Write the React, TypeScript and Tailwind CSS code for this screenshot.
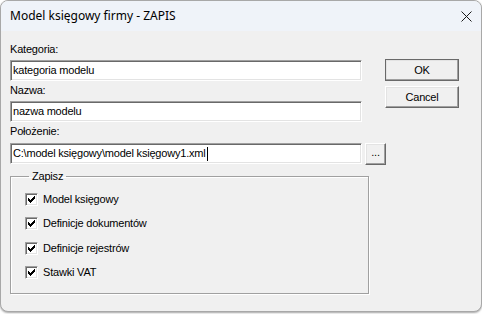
import React from "react";

const dlg = { fontFamily: '"Liberation Sans", Arial, sans-serif', letterSpacing: "-0.2px" };

function Field({ value, caret }: { value: string; caret?: boolean }) {
  return (
    <div className="flex h-[21px] w-[352px] shrink-0 items-center border border-t-[#a0a0a0] border-l-[#a0a0a0] border-b-white border-r-white bg-white pl-[2px] text-[11px] leading-[13px] text-black shadow-[inset_1px_1px_0_#696969,inset_-1px_-1px_0_#e3e3e3]">
      <span className="whitespace-pre">{value}</span>
      {caret && <span className="ml-[1px] h-[14px] w-px bg-black" />}
    </div>
  );
}

function WinButton({ label, className = "" }: { label: string; className?: string }) {
  return (
    <button
      className={`flex shrink-0 items-center justify-center border border-t-white border-l-white border-b-[#696969] border-r-[#696969] bg-[#f0f0f0] text-[11px] leading-[13px] text-black shadow-[inset_-1px_-1px_0_#a0a0a0,inset_1px_1px_0_#e3e3e3] ${className}`}
    >
      {label}
    </button>
  );
}

function Check({ label }: { label: string }) {
  return (
    <div className="flex h-[13px] items-center gap-[5px]">
      <div className="flex h-[13px] w-[13px] items-center justify-center border border-t-[#a0a0a0] border-l-[#a0a0a0] border-b-white border-r-white bg-white shadow-[inset_1px_1px_0_#696969,inset_-1px_-1px_0_#e3e3e3]">
        <svg width="7" height="7" viewBox="0 0 7 7" shapeRendering="crispEdges">
          <path d="M0 2h1v3h-1zM1 3h1v3h-1zM2 4h1v3h-1zM3 3h1v3h-1zM4 2h1v3h-1zM5 1h1v3h-1zM6 0h1v3h-1z" fill="#000" />
        </svg>
      </div>
      <span className="text-[11px] leading-[13px] text-black">{label}</span>
    </div>
  );
}

export default function App() {
  return (
    <div className="h-[314px] w-[482px] overflow-hidden bg-white">
      <div className="flex h-[312px] flex-col overflow-hidden rounded-[8px] border border-[#a8a8a8] bg-[#f0f0f0] shadow-[0_1px_2px_rgba(0,0,0,0.35)]">
        {/* Title bar */}
        <div className="flex h-[30px] shrink-0 items-center justify-between bg-[#eff3f9] pl-[9px] pr-[9px]">
          <span
            className="text-[12px] text-black"
            style={{ fontFamily: '"Noto Sans", "Segoe UI", sans-serif' }}
          >
            Model księgowy firmy - ZAPIS
          </span>
          <svg width="11" height="11" viewBox="0 0 11 11">
            <path d="M0.5 0.5L10.5 10.5M10.5 0.5L0.5 10.5" stroke="#1a1a1a" strokeWidth="1" />
          </svg>
        </div>

        {/* Body */}
        <div className="flex pl-[9px]" style={dlg}>
          <div className="flex w-[359px] shrink-0 flex-col">
            <div className="mt-[12px] text-[11px] leading-[13px] text-black">Kategoria:</div>
            <div className="mt-[4px]">
              <Field value="kategoria modelu" />
            </div>
            <div className="mt-[3px] text-[11px] leading-[13px] text-black">Nazwa:</div>
            <div className="mt-[4px]">
              <Field value="nazwa modelu" />
            </div>
            <div className="mt-[3px] text-[11px] leading-[13px] text-black">Położenie:</div>
            <div className="mt-[5px] flex items-start gap-[3px]">
              <Field value="C:\model księgowy\model księgowy1.xml" caret />
              <WinButton label="..." className="h-[22px] w-[21px] pb-[3px]" />
            </div>

            <fieldset className="mt-[5px] w-[359px] border border-[#a0a0a0] pb-[14px] pl-[14px] shadow-[1px_1px_0_#fff,inset_1px_1px_0_#fff]">
              <legend className="ml-[4px] px-[3px] text-[11px] leading-[13px] text-black">Zapisz</legend>
              <div className="mt-[10px] flex flex-col gap-[11.4px]">
                <Check label="Model księgowy" />
                <Check label="Definicje dokumentów" />
                <Check label="Definicje rejestrów" />
                <Check label="Stawki VAT" />
              </div>
            </fieldset>
          </div>

          <div className="ml-[16px] flex flex-col gap-[5px] pt-[28px]">
            <WinButton label="OK" className="h-[22px] w-[74px] outline outline-1 -outline-offset-1 outline-[#696969]" />
            <WinButton label="Cancel" className="h-[22px] w-[74px]" />
          </div>
        </div>
      </div>
    </div>
  );
}
